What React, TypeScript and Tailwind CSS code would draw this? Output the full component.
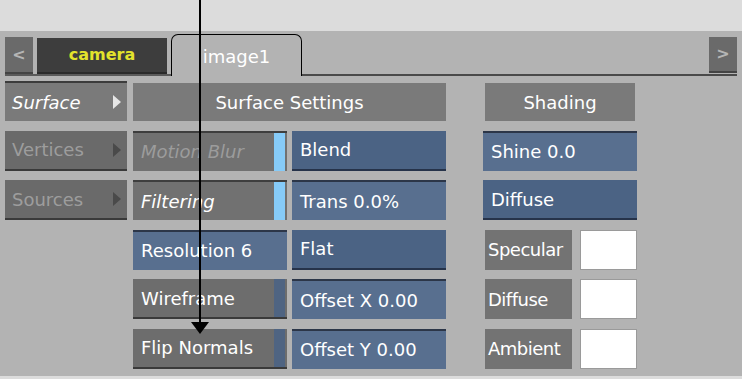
import React from 'react';

const font = { fontFamily: '"DejaVu Sans", "Liberation Sans", sans-serif' };

function NavItem({ label, active }: { label: string; active?: boolean }) {
    return (
        <div
            className={
                active
                    ? 'h-[40px] flex items-center justify-between pl-[7px] pr-[6px] bg-[#7a7a7a] border-t-2 border-[#3c3c3c] text-white italic'
                    : 'h-[40px] flex items-center justify-between pl-[7px] pr-[6px] bg-[#6a6a6a] border-b-2 border-[#3a3a3a] text-[#9d9d9d]'
            }
        >
            <span>{label}</span>
            <span
                className={
                    active
                        ? 'w-0 h-0 border-y-[7px] border-y-transparent border-l-[8px] border-l-[#e6e6e6]'
                        : 'w-0 h-0 border-y-[7px] border-y-transparent border-l-[8px] border-l-[#4a4a4a]'
                }
            />
        </div>
    );
}

function ToggleBtn({ label, dim }: { label: string; dim?: boolean }) {
    return (
        <div className="h-[40px] flex bg-[#717171] border-t-2 border-[#3e3e3e] pr-[2px]">
            <div className={'flex-1 flex items-center pl-[8px] italic ' + (dim ? 'text-[#9c9c9c]' : 'text-white')}>
                {label}
            </div>
            <div className="w-[11px] bg-[#86cbf8]" />
        </div>
    );
}

function GrayBtn({ label }: { label: string }) {
    return (
        <div className="h-[40px] flex bg-[#6d6d6d] border-b-2 border-[#3a3a3a] pr-[2px]">
            <div className="flex-1 flex items-center pl-[8px] text-white">{label}</div>
            <div className="w-[11px] bg-[#4f6482]" />
        </div>
    );
}

function BlueBtn({ label, dark }: { label: string; dark?: boolean }) {
    return (
        <div
            className={
                dark
                    ? 'h-[40px] flex items-center pl-[8px] bg-[#4b6384] border-b-2 border-[#26334a] text-white'
                    : 'h-[40px] flex items-center pl-[8px] bg-[#586f8f] border-t-2 border-[#2c3648] text-white'
            }
        >
            {label}
        </div>
    );
}

function ColorRow({ label }: { label: string }) {
    return (
        <div className="h-[40px] flex gap-[8px] pl-[2px]">
            <div className="w-[87px] flex items-center pl-[3px] bg-[#737373] text-white tracking-[-0.5px]">{label}</div>
            <div className="w-[57px] bg-white border border-[#9a9a9a]" />
        </div>
    );
}

export default function App() {
    return (
        <div className="relative w-[742px] h-[379px] bg-[#dcdcdc] overflow-hidden text-[18px]" style={font}>
            <div className="h-[31px]" />
            <div className="h-[345px] bg-[#b3b3b3]">
                {/* tab bar */}
                <div className="flex h-[45px] px-[5px]">
                    <div className="w-[166px] flex items-start gap-[4px] pt-[6px] border-b-2 border-[#5a5a5a]">
                        <div className="w-[28px] h-[37px] flex items-center justify-center bg-[#6a6a6a] border-b-2 border-[#444] text-[#b5b5b5] font-bold text-[16px]">
                            &lt;
                        </div>
                        <div className="w-[130px] h-[36px] mt-[1px] flex items-center justify-center bg-[#3d3d3d] border-b-2 border-[#2a2a2a] text-[#e3e32c] font-bold text-[16px]">
                            camera
                        </div>
                    </div>
                    <div className="w-[131px] h-[42px] mt-[3px] border-t border-x border-black rounded-t-[7px] flex items-start justify-center pt-[8px] text-white">
                        image1
                    </div>
                    <div className="flex-1 flex justify-end items-start pt-[6px] border-b-2 border-[#4a4a4a]">
                        <div className="w-[28px] h-[36px] flex items-center justify-center bg-[#6a6a6a] border-b-2 border-[#444] text-[#b5b5b5] font-bold text-[16px]">
                            &gt;
                        </div>
                    </div>
                </div>

                {/* content */}
                <div className="flex px-[5px] pt-[5px]">
                    <div className="w-[122px] flex flex-col gap-[9.6px]">
                        <NavItem label="Surface" active />
                        <NavItem label="Vertices" />
                        <NavItem label="Sources" />
                    </div>

                    <div className="ml-[6px] w-[313px] flex flex-col gap-[9.6px]">
                        <div className="h-[40px] pt-[2px]">
                            <div className="h-[38px] flex items-center justify-center bg-[#7a7a7a] text-white">
                                Surface Settings
                            </div>
                        </div>
                        <div className="flex gap-[5px]">
                            <div className="w-[154px] flex flex-col gap-[9.6px]">
                                <ToggleBtn label="Motion Blur" dim />
                                <ToggleBtn label="Filtering" />
                                <BlueBtn label="Resolution 6" />
                                <GrayBtn label="Wireframe" />
                                <GrayBtn label="Flip Normals" />
                            </div>
                            <div className="w-[154px] flex flex-col gap-[9.6px]">
                                <BlueBtn label="Blend" dark />
                                <BlueBtn label="Trans 0.0%" />
                                <BlueBtn label="Flat" dark />
                                <BlueBtn label="Offset X 0.00" />
                                <BlueBtn label="Offset Y 0.00" />
                            </div>
                        </div>
                    </div>

                    <div className="ml-[37px] w-[154px] flex flex-col gap-[9.6px]">
                        <div className="h-[40px] pt-[2px] px-[2px]">
                            <div className="h-[38px] flex items-center justify-center bg-[#7a7a7a] text-white">
                                Shading
                            </div>
                        </div>
                        <BlueBtn label="Shine 0.0" />
                        <BlueBtn label="Diffuse" dark />
                        <ColorRow label="Specular" />
                        <ColorRow label="Diffuse" />
                        <ColorRow label="Ambient" />
                    </div>
                </div>
            </div>

            {/* annotation arrow */}
            <svg className="absolute left-0 top-0 pointer-events-none" width="742" height="379">
                <line x1="200" y1="0" x2="200" y2="324" stroke="#000" strokeWidth="2" />
                <polygon points="191,322 209,322 200,334" fill="#000" />
            </svg>
        </div>
    );
}
